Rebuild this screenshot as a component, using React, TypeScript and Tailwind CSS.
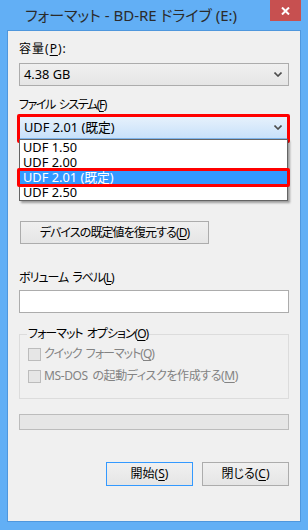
import React from "react";

const font = "font-['Noto_Sans','Noto_Sans_CJK_JP',sans-serif] [font-feature-settings:'palt']";

function Chevron() {
  return (
    <svg width="8" height="5" viewBox="0 0 8 5" className="shrink-0">
      <path d="M0.5 0.5 L4 4 L7.5 0.5" fill="none" stroke="#4d4d4d" strokeWidth="1.6" />
    </svg>
  );
}

function Acc({ k }: { k: string }) {
  return (
    <>
      (<u className="underline-offset-2">{k}</u>)
    </>
  );
}

export default function App() {
  return (
    <div className={`w-[308px] h-[530px] bg-[#62aff5] flex flex-col ${font} text-[12px] text-black`}>
      {/* Title bar */}
      <div className="h-[30px] flex items-start justify-between shrink-0">
        <div className="pl-[25px] pt-[5px] text-[15px] leading-[21px] text-[#2b2b2b]">
          フォーマット - BD-RE ドライブ (E:)
        </div>
        <div className="mr-[7px] w-[31px] h-[21px] bg-[#c75050] flex items-center justify-center">
          <svg width="9" height="8" viewBox="0 0 9 8">
            <path d="M1 0.5 L8 7.5 M8 0.5 L1 7.5" stroke="#fff" strokeWidth="2" />
          </svg>
        </div>
      </div>

      {/* Client area */}
      <div className="ml-[7px] w-[294px] h-[492px] border border-[#4f97dd] bg-[#f0f0f0] relative">
        <div className="flex flex-col px-[11px] pt-[10px]">
          <div className="h-[16px] leading-[16px] tracking-[1px]">
            容量<Acc k="P" />:
          </div>
          <div className="mt-[6px] h-[23px] border border-[#acacac] bg-gradient-to-b from-[#f0f0f0] to-[#e5e5e5] flex items-center justify-between pl-[4px] pr-[6px] text-[12.8px]">
            <span>4.38 GB</span>
            <Chevron />
          </div>

          <div className="mt-[11px] h-[16px] leading-[16px] tracking-[-1.4px] [word-spacing:2px]">
            ファイル システム<Acc k="F" />
          </div>
          <div className="mt-[3px] h-[23px] border border-[#7eb4ea] bg-gradient-to-b from-[#e6f1fc] to-[#c8e1fa] flex items-center justify-between pl-[4px] pr-[6px] text-[12.8px]">
            <span>UDF 2.01 (既定)</span>
            <Chevron />
          </div>

          <div className="mt-[82px] ml-[1px] w-[189px] h-[23px] border border-[#acacac] bg-gradient-to-b from-[#f0f0f0] to-[#e5e5e5] flex items-center justify-center tracking-[-0.9px]">
            デバイスの既定値を復元する<Acc k="D" />
          </div>

          <div className="mt-[26px] h-[16px] leading-[16px] tracking-[-1px] [word-spacing:2px]">
            ボリューム ラベル<Acc k="L" />
          </div>
          <div className="mt-[4px] h-[23px] border border-[#acacac] bg-white" />

          <fieldset className="mt-[13px] h-[73px] border border-[#dcdcdc] px-[8px]">
            <legend className="px-[1px] -ml-[1px] leading-[16px] tracking-[-1px] [word-spacing:2px]">
              フォーマット オプション<Acc k="O" />
            </legend>
            <div className="flex items-center gap-[3px] mt-[4px] h-[16px] text-[#838383]">
              <span className="w-[13px] h-[13px] border border-[#bcbcbc] bg-[#e6e6e6]" />
              <span className="tracking-[-1px] [word-spacing:2px]">
                クイック フォーマット<Acc k="Q" />
              </span>
            </div>
            <div className="flex items-center gap-[3px] mt-[6px] h-[16px] text-[#838383]">
              <span className="w-[13px] h-[13px] border border-[#bcbcbc] bg-[#e6e6e6]" />
              <span className="tracking-[-0.4px] [word-spacing:2px]">
                MS-DOS の起動ディスクを作成する<Acc k="M" />
              </span>
            </div>
          </fieldset>

          <div className="mt-[15px] h-[16px] border border-[#bcbcbc] bg-[#e6e6e6]" />

          <div className="mt-[32px] flex justify-end gap-[9px]">
            <div className="w-[87px] h-[24px] border border-[#3399ff] bg-gradient-to-b from-[#f0f0f0] to-[#e5e5e5] flex items-center justify-center">
              開始<Acc k="S" />
            </div>
            <div className="w-[87px] h-[24px] border border-[#acacac] bg-gradient-to-b from-[#f0f0f0] to-[#e5e5e5] flex items-center justify-center">
              閉じる<Acc k="C" />
            </div>
          </div>
        </div>

        {/* Red highlight around combo */}
        <div className="absolute left-[9px] top-[83px] w-[273px] h-[29px] border-[3px] border-[#ff0000] rounded-[2px] pointer-events-none" />

        {/* Dropdown list */}
        <div className="absolute left-[11px] top-[108px] w-[269px] bg-white border border-[#646464] shadow-[2px_2px_2px_rgba(0,0,0,0.35)] text-[12.8px]">
          <div className="h-[15px] leading-[15px] pl-[3px]">UDF 1.50</div>
          <div className="h-[15px] leading-[15px] pl-[3px]">UDF 2.00</div>
          <div className="h-[15px] leading-[15px] pl-[3px] bg-[#3399ff] text-white">UDF 2.01 (既定)</div>
          <div className="h-[15px] leading-[15px] pl-[3px]">UDF 2.50</div>
        </div>

        {/* Red highlight around selected item */}
        <div className="absolute left-[9px] top-[137px] w-[273px] h-[19px] border-[3px] border-[#ff0000] rounded-[2px] pointer-events-none" />
      </div>
    </div>
  );
}
